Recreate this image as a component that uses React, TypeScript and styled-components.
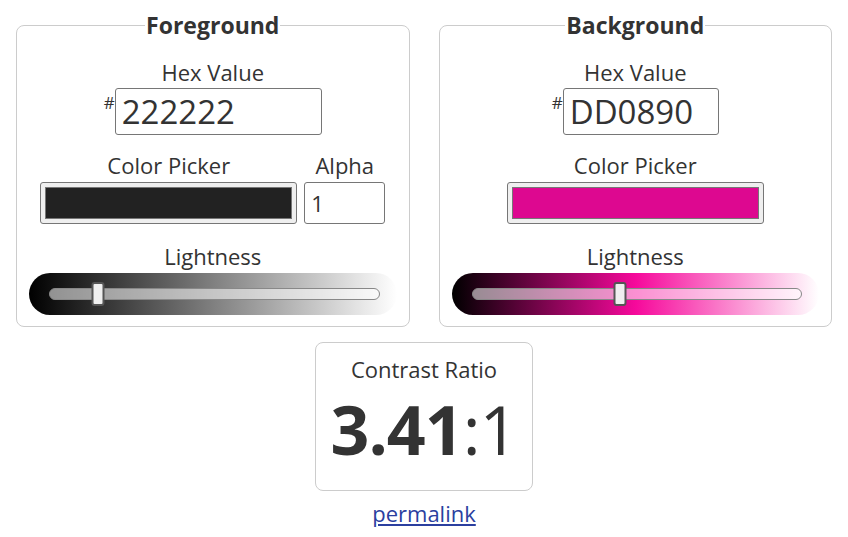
import React from 'react'
import styled, { createGlobalStyle } from 'styled-components'

const GlobalStyle = createGlobalStyle`
  body {
    margin: 0;
    font-family: "Open Sans", "Liberation Sans", sans-serif;
    color: #333;
    background: #fff;
  }
`

const Page = styled.div`
  padding: 9px 16px 0;
  display: flex;
  flex-direction: column;
  align-items: center;
`

const Panels = styled.div`
  width: 100%;
  display: grid;
  grid-template-columns: 1fr 1fr;
  gap: 29px;
`

const Fieldset = styled.fieldset`
  margin: 0;
  border: 1px solid #ccc;
  border-radius: 8px;
  padding: 0 12px 11px;
  min-width: 0;
  display: flex;
  flex-direction: column;
  align-items: center;
`

const Legend = styled.legend`
  margin: 0 auto;
  padding: 0 1px;
  font-size: 23px;
  line-height: 32px;
  font-weight: 700;
`

const Label = styled.div`
  font-size: 22px;
  line-height: 28px;
  padding-bottom: 2px;
  text-align: center;
`

const HexBlock = styled.div`
  margin-top: 17px;
  display: flex;
  flex-direction: column;
  align-items: center;
`

const HexRow = styled.div`
  display: flex;
  align-items: flex-start;
`

const Hash = styled.span`
  font-size: 17px;
  line-height: 17px;
  margin-top: 6px;
`

const HexInput = styled.input<{ $w: number }>`
  box-sizing: border-box;
  width: ${p => p.$w}px;
  height: 47px;
  margin: 0;
  border: 1px solid #767676;
  border-radius: 3px;
  padding: 0 6px;
  font-family: inherit;
  font-size: 33px;
  color: #333;
  background: #fff;
`

const PickerRow = styled.div`
  margin-top: 16px;
  display: flex;
  gap: 7px;
  justify-content: center;
`

const PickerCol = styled.div`
  display: flex;
  flex-direction: column;
  align-items: center;
`

const ColorButton = styled.div`
  box-sizing: border-box;
  width: 257px;
  height: 42px;
  margin-top: 1px;
  padding: 4px 4px;
  background: #efefef;
  border: 1px solid #767676;
  border-radius: 3px;
`

const Swatch = styled.div<{ $color: string }>`
  height: 100%;
  box-sizing: border-box;
  background: ${p => p.$color};
  border: 1px solid #777;
`

const AlphaInput = styled.input`
  box-sizing: border-box;
  width: 81px;
  height: 42px;
  margin: 1px 0 0;
  border: 1px solid #767676;
  border-radius: 3px;
  padding: 0 6px;
  font-family: inherit;
  font-size: 22px;
  color: #333;
  background: #fff;
`

const LightBlock = styled.div`
  margin-top: 18px;
  width: 100%;
  display: flex;
  flex-direction: column;
  align-items: center;
`

const Slider = styled.div<{ $gradient: string }>`
  box-sizing: border-box;
  width: 100%;
  height: 42px;
  margin-top: 1px;
  border-radius: 21px;
  padding: 0 17px 0 20px;
  display: flex;
  align-items: center;
  background: ${p => p.$gradient};
`

const Track = styled.div`
  position: relative;
  flex: 1;
  height: 12px;
  box-sizing: border-box;
  border: 1px solid #888;
  border-radius: 6px;
  background: rgba(255, 255, 255, 0.55);
`

const Thumb = styled.div`
  position: absolute;
  top: 50%;
  width: 13px;
  height: 24px;
  box-sizing: border-box;
  transform: translate(-50%, -50%);
  background: #efefef;
  border: 2px solid #555;
  border-radius: 3px;
`

const Result = styled.div`
  margin-top: 15px;
  box-sizing: border-box;
  width: 218px;
  height: 149px;
  border: 1px solid #ccc;
  border-radius: 8px;
  padding-top: 13px;
  display: flex;
  flex-direction: column;
  align-items: center;
`

const ResultLabel = styled.div`
  font-size: 22px;
  line-height: 26px;
`

const Ratio = styled.div`
  font-size: 68px;
  line-height: 94px;
  letter-spacing: -1px;
  b {
    font-weight: 700;
  }
`

const Permalink = styled.a`
  margin-top: 7px;
  font-size: 22px;
  line-height: 30px;
  color: #2b3f9f;
  text-decoration: underline;
`

type PanelProps = {
  title: string
  hex: string
  hexWidth: number
  alpha?: string
  lightness: number
  gradient: string
}

const ColorPanel = ({ title, hex, hexWidth, alpha, lightness, gradient }: PanelProps) => (
  <Fieldset>
    <Legend>{title}</Legend>
    <HexBlock>
      <Label>Hex Value</Label>
      <HexRow>
        <Hash>#</Hash>
        <HexInput $w={hexWidth} defaultValue={hex} />
      </HexRow>
    </HexBlock>
    <PickerRow>
      <PickerCol>
        <Label>Color Picker</Label>
        <ColorButton>
          <Swatch $color={'#' + hex} />
        </ColorButton>
      </PickerCol>
      {alpha !== undefined && (
        <PickerCol>
          <Label>Alpha</Label>
          <AlphaInput defaultValue={alpha} />
        </PickerCol>
      )}
    </PickerRow>
    <LightBlock>
      <Label>Lightness</Label>
      <Slider $gradient={gradient}>
        <Track>
          <Thumb style={{ left: `${lightness}%` }} />
        </Track>
      </Slider>
    </LightBlock>
  </Fieldset>
)

export default function App() {
  return (
    <>
      <GlobalStyle />
      <Page>
        <Panels>
          <ColorPanel
            title="Foreground"
            hex="222222"
            hexWidth={207}
            alpha="1"
            lightness={14.6}
            gradient="linear-gradient(to right, #000, #fff)"
          />
          <ColorPanel
            title="Background"
            hex="DD0890"
            hexWidth={156}
            lightness={45}
            gradient="linear-gradient(to right, #000, hsl(323, 93%, 50%) 50%, #fff)"
          />
        </Panels>
        <Result>
          <ResultLabel>Contrast Ratio</ResultLabel>
          <Ratio>
            <b>3.41</b>:1
          </Ratio>
        </Result>
        <Permalink href="#">permalink</Permalink>
      </Page>
    </>
  )
}
